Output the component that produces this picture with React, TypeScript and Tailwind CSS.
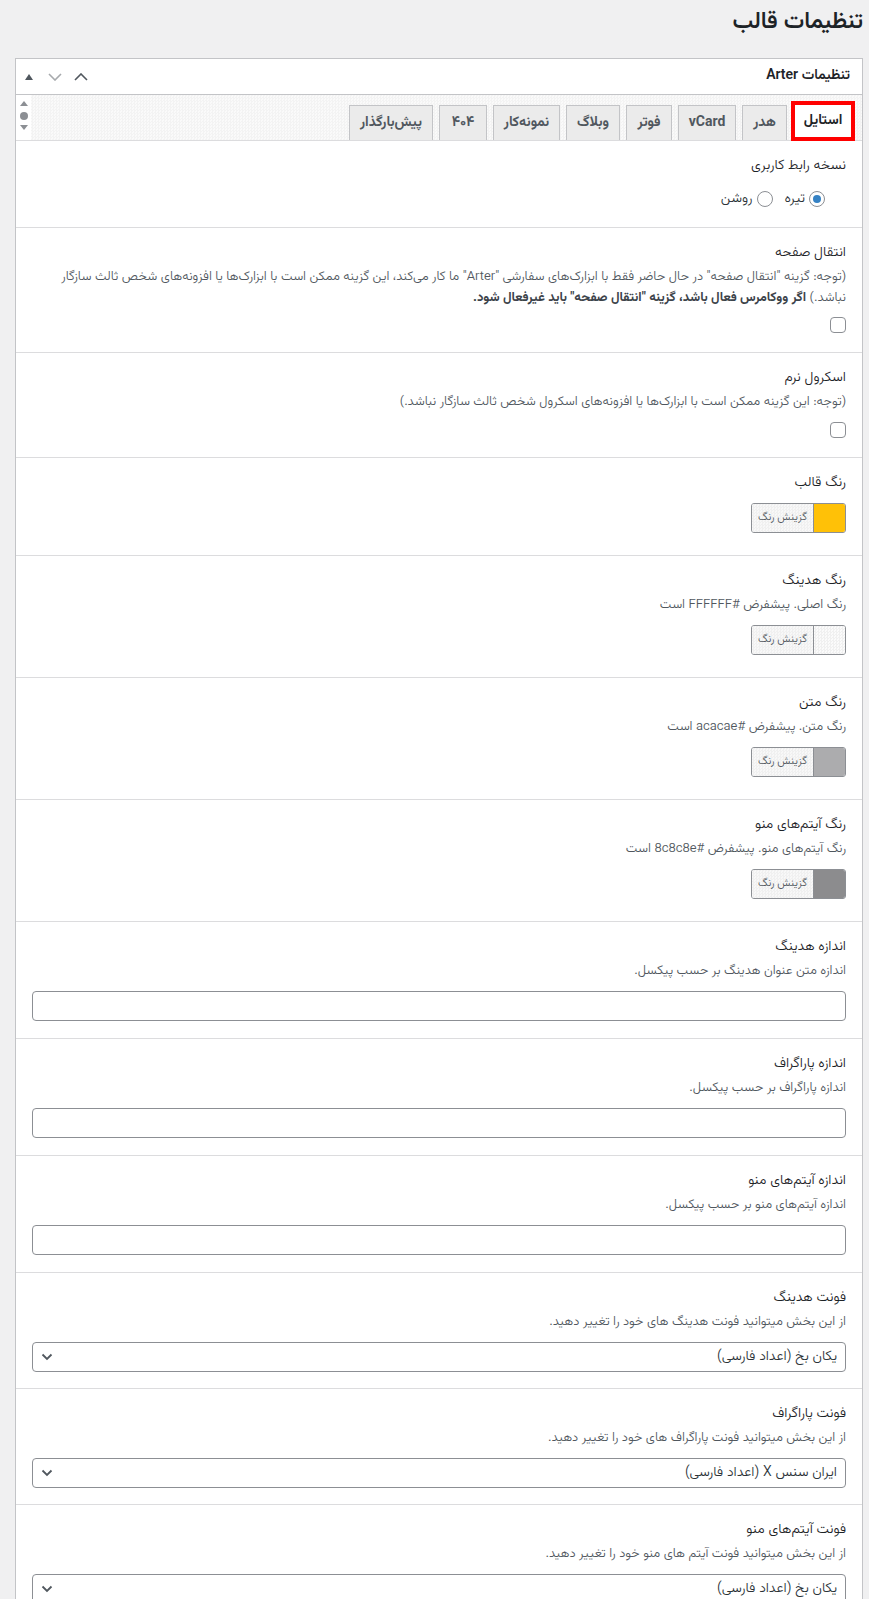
import React from "react";

const tabs: { label: string; w: string }[] = [
  { label: "هدر", w: "w-[45px]" },
  { label: "vCard", w: "w-[58px]" },
  { label: "فوتر", w: "w-[46px]" },
  { label: "وبلاگ", w: "w-[54px]" },
  { label: "نمونه‌کار", w: "w-[67px]" },
  { label: "۴۰۴", w: "w-[48px]" },
  { label: "پیش‌بارگذار", w: "w-[84px]" },
];

function Label({ children }: { children: React.ReactNode }) {
  return <div className="text-[14px] font-light leading-[28px] text-[#1d2327]">{children}</div>;
}

function Desc({ children }: { children: React.ReactNode }) {
  return <div className="text-[13px] font-light leading-[20px] text-[#50575e]">{children}</div>;
}

function ColorBtn({ swatch, mt }: { swatch: string; mt: string }) {
  return (
    <div className={`${mt} flex h-[30px] w-[95px] overflow-hidden rounded-[3px] border border-[#8c8f94]`}>
      <div className={`w-[31px] ${swatch}`} />
      <div className="flex flex-1 items-center justify-center border-r border-[#8c8f94] bg-[repeating-conic-gradient(#f0f0f0_0%_25%,#f8f8f8_0%_50%)] bg-[length:3px_3px] text-[11px] font-light text-[#50575e]">
        گزینش رنگ
      </div>
    </div>
  );
}

function Checkbox() {
  return <div className="mt-[10px] h-[16px] w-[16px] rounded-[4px] border border-[#8c8f94] bg-white" />;
}

function TextInput() {
  return <div className="mt-[10px] h-[30px] w-full rounded-[4px] border border-[#8c8f94] bg-white" />;
}

function Select({ value }: { value: string }) {
  return (
    <div className="mt-[10px] flex h-[30px] w-full items-center justify-between rounded-[4px] border border-[#8c8f94] bg-white pl-[8px] pr-[8px]">
      <span className="text-[14px] font-light text-[#2c3338]">{value}</span>
      <svg width="12" height="8" viewBox="0 0 12 8">
        <path d="M1.5 1.5 L6 6 L10.5 1.5" stroke="#50575e" strokeWidth="1.8" fill="none" />
      </svg>
    </div>
  );
}

function Radio({ checked, label }: { checked?: boolean; label: string }) {
  return (
    <div className="flex items-center gap-[4px]">
      <div className="flex h-[16px] w-[16px] items-center justify-center rounded-full border border-[#8c8f94] bg-white">
        {checked && <div className="h-[8px] w-[8px] rounded-full bg-[#3582c4]" />}
      </div>
      <span className="text-[14px] font-light text-[#2c3338]">{label}</span>
    </div>
  );
}

export default function App() {
  return (
    <div
      dir="rtl"
      className="min-h-[1599px] bg-[#f0f0f1] pl-[15px] pr-[6px] font-['Vazirmatn','DejaVu_Sans',sans-serif]"
    >
      <h1 className="mb-[22px] pt-[8px] text-[23px] font-semibold leading-[28px] text-[#1d2327]">تنظیمات قالب</h1>

      <div className="border border-[#c3c4c7] bg-white">
        {/* header */}
        <div className="flex h-[36px] items-center justify-between border-b border-[#c3c4c7] pr-[12px]">
          <div className="text-[14px] font-semibold text-[#1d2327]">تنظیمات Arter</div>
          <div dir="ltr" className="flex items-center pl-[9px]">
            <svg width="8" height="6" viewBox="0 0 8 6">
              <path d="M0 6 L4 0 L8 6Z" fill="#50575e" />
            </svg>
            <svg className="ml-[15px]" width="14" height="8" viewBox="0 0 14 8">
              <path d="M1 1 L7 7 L13 1" stroke="#a7aaad" strokeWidth="1.6" fill="none" />
            </svg>
            <svg className="ml-[12px]" width="14" height="8" viewBox="0 0 14 8">
              <path d="M1 7 L7 1 L13 7" stroke="#50575e" strokeWidth="1.6" fill="none" />
            </svg>
          </div>
        </div>

        {/* tabs */}
        <div className="flex h-[46px] items-stretch border-b border-[#dcdcde] bg-[repeating-conic-gradient(#f3f3f3_0%_25%,#fafafa_0%_50%)] bg-[length:3px_3px]">
          <div className="flex flex-1 items-end gap-[6px] pr-[7px]">
            <div className="relative z-10 mb-[-1px] ml-[-2px] flex h-[40px] w-[64px] items-center justify-center border-4 border-[#ff0000] bg-white text-[14px] font-bold text-[#1d2327]">
              استایل
            </div>
            {tabs.map((t) => (
              <div
                key={t.label}
                className={`${t.w} flex h-[35px] items-center justify-center border border-b-0 border-[#c3c4c7] bg-[#ebebeb] text-[14px] font-bold text-[#50575e]`}
              >
                {t.label}
              </div>
            ))}
          </div>
          <div className="flex w-[15px] flex-col items-center bg-white pt-[6px]">
            <svg width="8" height="5" viewBox="0 0 8 5">
              <path d="M0 5 L4 0 L8 5Z" fill="#8c8f94" />
            </svg>
            <div className="mt-[6px] h-[8px] w-[8px] rounded-full bg-[#8c8f94]" />
            <svg className="mt-[5px]" width="8" height="5" viewBox="0 0 8 5">
              <path d="M0 0 L4 5 L8 0Z" fill="#8c8f94" />
            </svg>
          </div>
        </div>

        {/* sections */}
        <div className="border-b border-[#dcdcde] px-4 pb-[18px] pt-[11px]">
          <Label>نسخه رابط کاربری</Label>
          <div className="mt-[9px] flex h-[20px] items-center gap-[12px] pr-[21px]">
            <Radio checked label="تیره" />
            <Radio label="روشن" />
          </div>
        </div>

        <div className="border-b border-[#dcdcde] px-4 pb-[19px] pt-[11px]">
          <Label>انتقال صفحه</Label>
          <div className="text-[13px] font-light leading-[21px] text-[#50575e]">
            (توجه: گزینه "انتقال صفحه" در حال حاضر فقط با ابزارک‌های سفارشی "Arter" ما کار می‌کند، این گزینه ممکن است با ابزارک‌ها یا افزونه‌های شخص ثالث سازگار نباشد.){" "}
            <b className="font-bold text-[#3c434a]">اگر ووکامرس فعال باشد، گزینه "انتقال صفحه" باید غیرفعال شود.</b>
          </div>
          <div className="mt-[8px] h-[16px] w-[16px] rounded-[4px] border border-[#8c8f94] bg-white" />
        </div>

        <div className="border-b border-[#dcdcde] px-4 pb-[19px] pt-[11px]">
          <Label>اسکرول نرم</Label>
          <Desc>(توجه: این گزینه ممکن است با ابزارک‌ها یا افزونه‌های اسکرول شخص ثالث سازگار نباشد.)</Desc>
          <Checkbox />
        </div>

        <div className="border-b border-[#dcdcde] px-4 pb-[22px] pt-[11px]">
          <Label>رنگ قالب</Label>
          <ColorBtn swatch="bg-[#ffc107]" mt="mt-[6px]" />
        </div>

        <div className="border-b border-[#dcdcde] px-4 pb-[22px] pt-[11px]">
          <Label>رنگ هدینگ</Label>
          <Desc>رنگ اصلی. پیشفرض #FFFFFF است</Desc>
          <ColorBtn swatch="bg-[repeating-conic-gradient(#f0f0f0_0%_25%,#fbfbfb_0%_50%)] bg-[length:3px_3px]" mt="mt-[10px]" />
        </div>

        <div className="border-b border-[#dcdcde] px-4 pb-[22px] pt-[11px]">
          <Label>رنگ متن</Label>
          <Desc>رنگ متن. پیشفرض #acacae است</Desc>
          <ColorBtn swatch="bg-[#acacae]" mt="mt-[10px]" />
        </div>

        <div className="border-b border-[#dcdcde] px-4 pb-[22px] pt-[11px]">
          <Label>رنگ آیتم‌های منو</Label>
          <Desc>رنگ آیتم‌های منو. پیشفرض #8c8c8e است</Desc>
          <ColorBtn swatch="bg-[#8c8c8e]" mt="mt-[10px]" />
        </div>

        <div className="border-b border-[#dcdcde] px-4 pb-[17px] pt-[11px]">
          <Label>اندازه هدینگ</Label>
          <Desc>اندازه متن عنوان هدینگ بر حسب پیکسل.</Desc>
          <TextInput />
        </div>

        <div className="border-b border-[#dcdcde] px-4 pb-[17px] pt-[11px]">
          <Label>اندازه پاراگراف</Label>
          <Desc>اندازه پاراگراف بر حسب پیکسل.</Desc>
          <TextInput />
        </div>

        <div className="border-b border-[#dcdcde] px-4 pb-[17px] pt-[11px]">
          <Label>اندازه آیتم‌های منو</Label>
          <Desc>اندازه آیتم‌های منو بر حسب پیکسل.</Desc>
          <TextInput />
        </div>

        <div className="border-b border-[#dcdcde] px-4 pb-[16px] pt-[11px]">
          <Label>فونت هدینگ</Label>
          <Desc>از این بخش میتوانید فونت هدینگ های خود را تغییر دهید.</Desc>
          <Select value="یکان بخ (اعداد فارسی)" />
        </div>

        <div className="border-b border-[#dcdcde] px-4 pb-[16px] pt-[11px]">
          <Label>فونت پاراگراف</Label>
          <Desc>از این بخش میتوانید فونت پاراگراف های خود را تغییر دهید.</Desc>
          <Select value="ایران سنس X (اعداد فارسی)" />
        </div>

        <div className="border-b border-[#dcdcde] px-4 pb-[16px] pt-[11px]">
          <Label>فونت آیتم‌های منو</Label>
          <Desc>از این بخش میتوانید فونت آیتم های منو خود را تغییر دهید.</Desc>
          <Select value="یکان بخ (اعداد فارسی)" />
        </div>
      </div>
    </div>
  );
}
